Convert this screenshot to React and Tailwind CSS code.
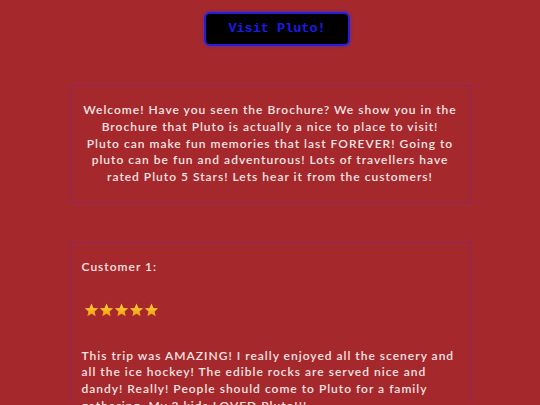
export default function App() {
  const font = { fontFamily: 'Lato, "Noto Sans", sans-serif' };
  return (
    <div className="min-h-[405px] bg-[#a4282c] pt-3 pb-10" style={font}>
      {/* Top button */}
      <div className="flex justify-center pl-[14px]">
        <button className="w-[146px] h-[34px] bg-black border-2 border-[#2a1fd0] rounded-md shadow-[0_0_3px_#3a2fe0] text-[#1c1ce0] text-[13.5px] font-bold font-['Liberation_Mono',monospace]">
          Visit Pluto!
        </button>
      </div>

      {/* Welcome box */}
      <div className="mx-auto mt-[39px] w-[401px] border border-dotted border-[#7a2090] px-2 py-4">
        <p className="text-center text-[#f6e4e2] text-[12px] font-semibold leading-[16.75px] tracking-[1px]">
          Welcome! Have you seen the Brochure? We show you in the<br />
          Brochure that Pluto is actually a nice to place to visit!<br />
          Pluto can make fun memories that last FOREVER! Going to<br />
          pluto can be fun and adventurous! Lots of travellers have<br />
          rated Pluto 5 Stars! Lets hear it from the customers!
        </p>
      </div>

      {/* Customer box */}
      <div className="mx-auto mt-[39px] w-[401px] border border-dotted border-[#7a2090] px-[11px] pt-4 pb-4 text-[#f6e4e2] text-[12px] font-semibold leading-[16.75px] tracking-[1px]">
        <p>Customer 1:</p>
        <div className="flex mt-[26px] ml-[2px]">
          {[0, 1, 2, 3, 4].map(i => (
            <svg key={i} width="15" height="16" viewBox="0 0 24 24">
              <defs>
                <linearGradient id={"g" + i} x1="0" y1="0" x2="0" y2="1">
                  <stop offset="0" stopColor="#ffd43a" />
                  <stop offset="1" stopColor="#f59a10" />
                </linearGradient>
              </defs>
              <path d="M12 1.5l3.1 7.1 7.6.7-5.8 5.1 1.8 7.5L12 17.9l-6.7 4 1.8-7.5-5.8-5.1 7.6-.7z" fill={"url(#g" + i + ")"} />
            </svg>
          ))}
        </div>
        <p className="mt-[30px]">
          This trip was AMAZING! I really enjoyed all the scenery and all the ice hockey! The edible rocks are served nice and dandy! Really! People should come to Pluto for a family gathering. My 2 kids LOVED Pluto!!!
        </p>
      </div>
    </div>
  );
}
